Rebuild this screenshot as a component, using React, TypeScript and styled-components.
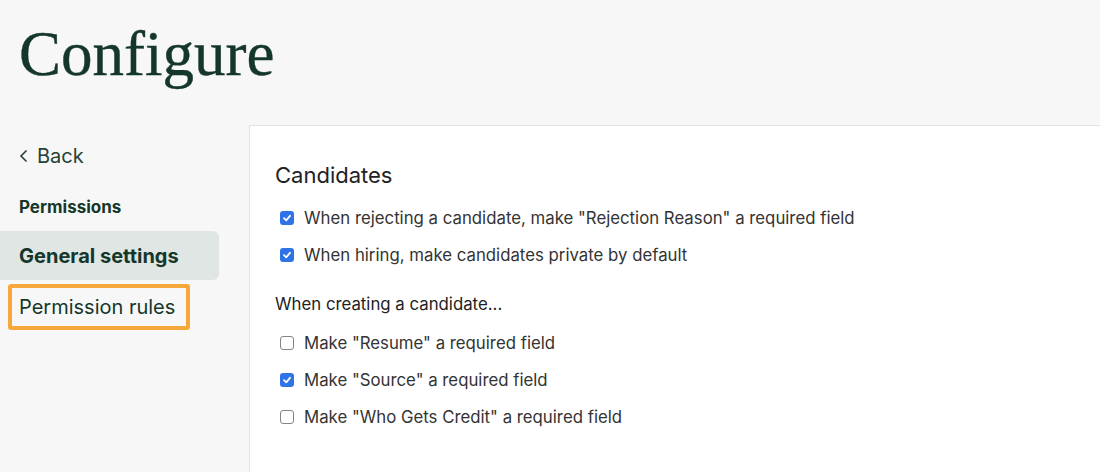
import styled, { createGlobalStyle } from "styled-components";
import { ReactElement } from "react";

const GlobalStyle = createGlobalStyle`
  html, body {
    margin: 0;
    padding: 0;
    background: #f7f7f7;
  }
  body {
    font-family: Inter, "Liberation Sans", sans-serif;
    color: #222;
    height: 472px;
    overflow: hidden;
  }
`;

const Page = styled.div`
  display: flex;
  flex-direction: column;
  height: 472px;
`;

const Title = styled.h1`
  margin: 0;
  padding: 18px 0 0 19px;
  height: 105px;
  box-sizing: border-box;
  font-family: "Liberation Serif", "DejaVu Serif", serif;
  font-weight: 400;
  font-size: 63px;
  line-height: 72px;
  color: #15372a;
  -webkit-text-stroke: 0.4px #15372a;
`;

const Body = styled.div`
  display: flex;
  flex: 1;
  padding-top: 20px;
`;

const Sidebar = styled.nav`
  width: 249px;
  flex-shrink: 0;
  display: flex;
  flex-direction: column;
`;

const BackLink = styled.a`
  display: flex;
  align-items: center;
  gap: 8px;
  padding: 20px 0 0 19px;
  height: 22px;
  font-size: 20px;
  color: #254236;
`;

const SectionLabel = styled.div`
  margin-top: 30px;
  padding-left: 19px;
  font-size: 17px;
  font-weight: 700;
  color: #15372a;
  line-height: 20px;
`;

const NavList = styled.div`
  margin-top: 14px;
  display: flex;
  flex-direction: column;
`;

const NavItem = styled.div<{ $active?: boolean; $highlight?: boolean }>`
  width: ${(p) => (p.$highlight ? "182px" : "219px")};
  box-sizing: border-box;
  height: ${(p) => (p.$highlight ? "46px" : "49px")};
  display: flex;
  align-items: center;
  padding-left: ${(p) => (p.$highlight ? "7px" : "19px")};
  margin-left: ${(p) => (p.$highlight ? "8px" : "0")};
  margin-top: ${(p) => (p.$highlight ? "4px" : "0")};
  font-size: 20px;
  font-weight: ${(p) => (p.$active ? 700 : 400)};
  color: #15372a;
  background: ${(p) => (p.$active ? "#dfe6e3" : "transparent")};
  border-radius: ${(p) => (p.$highlight ? "3px" : "0 6px 6px 0")};
  border: ${(p) => (p.$highlight ? "4px solid #f6a83a" : "none")};
`;

const Panel = styled.main`
  flex: 1;
  background: #fff;
  border-top: 1px solid #e3e3e3;
  border-left: 1px solid #e3e3e3;
  padding: 36px 0 0 25px;
`;

const Heading = styled.h2`
  margin: 0 0 11px;
  font-size: 22px;
  font-weight: 400;
  line-height: 26px;
  color: #222;
`;

const SubHeading = styled.div`
  margin: 20px 0 9px;
  font-size: 16.8px;
  line-height: 22px;
  color: #222;
`;

const Row = styled.label`
  display: flex;
  align-items: center;
  gap: 10px;
  height: 37px;
  padding-left: 5px;
  font-size: 16.8px;
  color: #333;
`;

const Box = styled.span<{ $checked: boolean }>`
  width: 14px;
  height: 14px;
  box-sizing: border-box;
  border-radius: 3px;
  display: flex;
  align-items: center;
  justify-content: center;
  background: ${(p) => (p.$checked ? "#2f74e6" : "#fff")};
  border: ${(p) => (p.$checked ? "none" : "1px solid #858585")};
`;

const Check = ({ checked, label }: { checked: boolean; label: string }): ReactElement => (
  <Row>
    <Box $checked={checked}>
      {checked && (
        <svg width="10" height="10" viewBox="0 0 10 10">
          <path d="M2 5.2 L4.2 7.3 L8 2.8" fill="none" stroke="#fff" strokeWidth="1.8" strokeLinecap="round" strokeLinejoin="round" />
        </svg>
      )}
    </Box>
    {label}
  </Row>
);

export default function App(): ReactElement {
  return (
    <Page>
      <GlobalStyle />
      <Title>Configure</Title>
      <Body>
        <Sidebar>
          <BackLink>
            <svg width="10" height="14" viewBox="0 0 10 14">
              <path d="M7.5 1.5 L2 7 L7.5 12.5" fill="none" stroke="#254236" strokeWidth="1.6" />
            </svg>
            Back
          </BackLink>
          <SectionLabel>Permissions</SectionLabel>
          <NavList>
            <NavItem $active>General settings</NavItem>
            <NavItem $highlight>Permission rules</NavItem>
          </NavList>
        </Sidebar>
        <Panel>
          <Heading>Candidates</Heading>
          <Check checked label={'When rejecting a candidate, make "Rejection Reason" a required field'} />
          <Check checked label="When hiring, make candidates private by default" />
          <SubHeading>When creating a candidate...</SubHeading>
          <Check checked={false} label={'Make "Resume" a required field'} />
          <Check checked label={'Make "Source" a required field'} />
          <Check checked={false} label={'Make "Who Gets Credit" a required field'} />
        </Panel>
      </Body>
    </Page>
  );
}
